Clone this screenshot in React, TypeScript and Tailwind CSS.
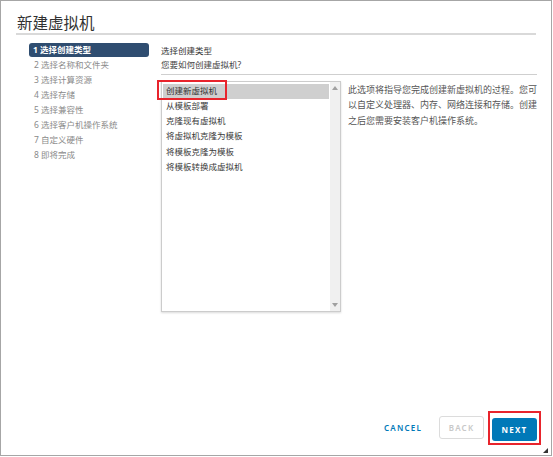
import React from "react";

const navItems = [
  "1 选择创建类型",
  "2 选择名称和文件夹",
  "3 选择计算资源",
  "4 选择存储",
  "5 选择兼容性",
  "6 选择客户机操作系统",
  "7 自定义硬件",
  "8 即将完成",
];

const listItems = [
  "创建新虚拟机",
  "从模板部署",
  "克隆现有虚拟机",
  "将虚拟机克隆为模板",
  "将模板克隆为模板",
  "将模板转换成虚拟机",
];

export default function App() {
  return (
    <div className="w-[553px] h-[457px] bg-white font-['Noto_Sans','Noto_Sans_CJK_SC',sans-serif]">
      <div className="relative w-[552px] h-[456px] border border-[#a6a6a6] bg-white flex flex-col">
        {/* Title */}
        <div className="mx-[15px] pt-[12px] border-b-2 border-[#d9d9d9]">
          <div className="text-[15.5px] leading-[20px] text-[#313131] pl-[1px]">新建虚拟机</div>
        </div>

        {/* Body */}
        <div className="flex pl-[28px] pr-[14px]">
          {/* Nav */}
          <div className="w-[121px] mt-[8px] flex flex-col gap-[1px]">
            {navItems.map((t, i) => (
              <div
                key={t}
                className={
                  i === 0
                    ? "h-[14px] flex items-center pl-[4px] rounded-[3px] bg-[#2f4d70] text-white font-bold text-[8.5px]"
                    : "h-[14px] flex items-center pl-[5px] text-[#8a8a8a] text-[8.5px]"
                }
              >
                {t}
              </div>
            ))}
          </div>

          {/* Content */}
          <div className="ml-[12px] flex-1 flex flex-col">
            <div className="pt-[9px] pb-[3px] border-b border-[#cfcfcf]">
              <div className="text-[8.5px] leading-[13.6px] text-[#333]">选择创建类型</div>
              <div className="text-[8.5px] leading-[13.6px] text-[#444]">您要如何创建虚拟机?</div>
            </div>

            <div className="mt-[6px] flex">
              {/* Listbox */}
              <div className="w-[180px] h-[231px] border border-[#cccccc] shadow-[0_1px_2px_rgba(0,0,0,0.15)] flex">
                <div className="flex-1 pt-[1.5px] px-[1px] flex flex-col">
                  {listItems.map((t, i) => (
                    <div
                      key={t}
                      className={
                        i === 0
                          ? "relative h-[15.2px] flex items-center pl-[3px] bg-[#cfcfcf] text-[#333] text-[8.5px]"
                          : "h-[15.2px] flex items-center pl-[3px] text-[#3a3a3a] text-[8.5px]"
                      }
                    >
                      {t}
                      {i === 0 && (
                        <div className="absolute left-[-6px] top-[-3.5px] w-[70px] h-[19.5px] border-2 border-[#e8242c]" />
                      )}
                    </div>
                  ))}
                </div>
                <div className="w-[10px] bg-[#f0f0f0] flex flex-col justify-between items-center py-[4px]">
                  <svg width="6" height="4" viewBox="0 0 6 4">
                    <path d="M0 4 L3 0 L6 4 Z" fill="#a0a0a0" />
                  </svg>
                  <svg width="6" height="4" viewBox="0 0 6 4">
                    <path d="M0 0 L3 4 L6 0 Z" fill="#a0a0a0" />
                  </svg>
                </div>
              </div>

              {/* Description */}
              <div className="ml-[7px] pt-[1px] text-[9px] leading-[15.3px] text-[#555] whitespace-nowrap">
                此选项将指导您完成创建新虚拟机的过程。您可
                <br />
                以自定义处理器、内存、网络连接和存储。创建
                <br />
                之后您需要安装客户机操作系统。
              </div>
            </div>
          </div>
        </div>

        {/* Footer */}
        <div className="mt-auto flex justify-end items-center pr-[14px] pb-[14px] gap-[7px]">
          <button className="h-[23px] px-[10px] text-[8px] font-semibold tracking-[1.2px] text-[#0079b8]">
            CANCEL
          </button>
          <button className="h-[23px] w-[45px] border border-[#dcdcdc] rounded-[3px] text-[8px] font-semibold tracking-[1.2px] text-[#c8c8c8]">
            BACK
          </button>
          <div className="relative ml-[1px]">
            <button className="h-[23px] w-[45px] rounded-[3px] bg-[#0079b8] text-[8px] font-bold tracking-[1.2px] text-white">
              NEXT
            </button>
            <div className="absolute -inset-[4px] border-2 border-[#e8242c]" />
          </div>
        </div>

        {/* Resize grip */}
        <svg className="absolute right-[3px] bottom-[2px]" width="5" height="5" viewBox="0 0 5 5">
          <path d="M5 0 L5 5 L0 5 Z" fill="#333" />
        </svg>
      </div>
    </div>
  );
}
